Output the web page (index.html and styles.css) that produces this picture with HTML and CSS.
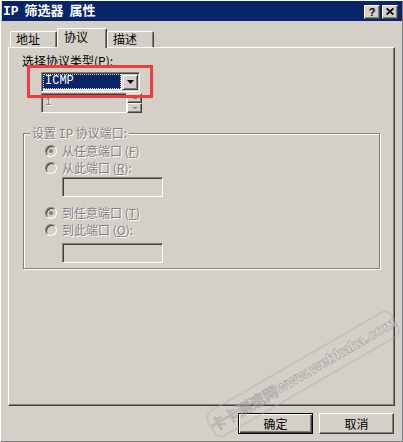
FILE: index.html
```html
<!DOCTYPE html>
<html>
<head>
<meta charset="utf-8">
<title>IP 筛选器 属性</title>
<link rel="stylesheet" href="styles.css">
</head>
<body>
<div class="window">
  <div class="titlebar">
    <span class="title"><span class="lat">IP</span> 筛选器 属性</span>
    <div class="tbtns">
      <span class="tbtn help">?</span>
      <span class="tbtn close"><svg width="8" height="7" viewBox="0 0 8 7"><path d="M0.6 0.4 L7.4 6.6 M7.4 0.4 L0.6 6.6" stroke="#000" stroke-width="1.7"/></svg></span>
    </div>
  </div>

  <div class="tabs">
    <div class="tab t1">地址</div>
    <div class="tab t2 active">协议</div>
    <div class="tab t3">描述</div>
  </div>

  <div class="panel">
    <div class="label">选择协议类型(<u>P</u>):</div>
    <div class="combo">
      <div class="combo-val">ICMP</div>
      <div class="combo-btn"><svg width="7" height="4" viewBox="0 0 7 4"><polygon points="0,0 7,0 3.5,4" fill="#000"/></svg></div>
    </div>
    <div class="spin">
      <div class="spin-edit dis">1</div>
      <div class="spin-btns">
        <div class="sb"><span class="arr up"></span></div>
        <div class="sb"><span class="arr down"></span></div>
      </div>
    </div>

    <div class="group">
      <div class="group-title dis">设置 <span class="lat">IP</span> 协议端口:</div>
      <div class="radio-row first"><span class="radio checked"></span><span class="dis">从任意端口 (<u>F</u>)</span></div>
      <div class="radio-row"><span class="radio"></span><span class="dis">从此端口 (<u>R</u>):</span></div>
      <div class="tb"></div>
      <div class="radio-row gap"><span class="radio checked"></span><span class="dis">到任意端口 (<u>T</u>)</span></div>
      <div class="radio-row"><span class="radio"></span><span class="dis">到此端口 (<u>O</u>):</span></div>
      <div class="tb tb2"></div>
    </div>

    <div class="highlight"></div>
  </div>

  <div class="buttons">
    <div class="btn default">确定</div>
    <div class="btn">取消</div>
  </div>

  <div class="watermark"><span class="wm-cn">卡卡测速网</span><span class="wm-en">www.webkaka.com</span></div>
</div>
</body>
</html>
```

FILE: styles.css
```css
html, body {
  margin: 0;
  padding: 0;
}
body {
  width: 403px;
  height: 442px;
  overflow: hidden;
  background: #d4d0c8;
  font-family: "Noto Sans CJK SC", "Noto Sans", sans-serif;
  font-size: 12px;
  color: #000;
}
.window {
  position: relative;
  width: 403px;
  height: 442px;
  box-sizing: border-box;
  padding: 1px 1px 1px 2px;
  background: #d4d0c8;
  box-shadow: inset 1px 1px 0 #fff, inset -1px -1px 0 #808080;
  overflow: hidden;
  display: flex;
  flex-direction: column;
}
.lat {
  font-family: "Liberation Mono", monospace;
}

/* title bar */
.titlebar {
  height: 20px;
  flex: none;
  background: #0a246a;
  color: #fff;
  display: flex;
  align-items: center;
  justify-content: space-between;
  padding: 0 4px 0 1px;
}
.title {
  font-weight: bold;
  font-size: 13px;
  line-height: 20px;
  white-space: pre;
  word-spacing: 3px;
}
.tbtns {
  display: flex;
  gap: 2px;
  margin-top: 1px;
}
.tbtn {
  width: 16px;
  height: 14px;
  box-sizing: border-box;
  background: #d4d0c8;
  border: 1px solid;
  border-color: #fff #404040 #404040 #fff;
  box-shadow: inset -1px -1px 0 #808080;
  display: flex;
  align-items: center;
  justify-content: center;
  color: #000;
}
.help {
  font-family: "Liberation Sans", sans-serif;
  font-weight: bold;
  font-size: 11px;
  line-height: 12px;
}

/* tabs */
.tabs {
  display: flex;
  align-items: flex-end;
  height: 19px;
  flex: none;
  margin: 7px 0 0 8px;
  position: relative;
  z-index: 2;
}
.tab {
  box-sizing: border-box;
  height: 16px;
  border-top: 1px solid #fff;
  border-left: 1px solid #fff;
  border-right: 1px solid #404040;
  box-shadow: inset -1px 0 0 #808080;
  border-radius: 2px 2px 0 0;
  padding-left: 5px;
  line-height: 14px;
  background: #d4d0c8;
}
.t1 { width: 47px; }
.t2 { width: 50px; }
.t3 { width: 47px; }
.tab.active {
  height: 20px;
  margin-bottom: -1px;
  padding-top: 1px;
  padding-left: 6px;
}

/* panel */
.panel {
  position: relative;
  flex: none;
  margin-left: 6px;
  width: 387px;
  height: 359px;
  box-sizing: border-box;
  border: 1px solid;
  border-color: #fff #404040 #404040 #fff;
  box-shadow: inset -1px -1px 0 #808080;
}
.label {
  margin: 6px 0 0 13px;
  line-height: 14px;
}
.combo {
  margin: 4px 0 0 32px;
  width: 99px;
  height: 20px;
  box-sizing: border-box;
  border: 1px solid;
  border-color: #808080 #fff #fff #808080;
  box-shadow: inset 1px 1px 0 #404040, inset -1px -1px 0 #d4d0c8;
  background: #fff;
  padding: 1px;
  display: flex;
}
.combo-val {
  flex: 1;
  height: 15px;
  box-sizing: border-box;
  margin: 0 1px 0 0;
  background: #0a246a;
  border: 1px dotted #e8dc8a;
  color: #fff;
  font-family: "Liberation Mono", monospace;
  font-size: 12px;
  line-height: 12px;
  padding-left: 1px;
}
.combo-btn {
  width: 16px;
  flex: none;
  box-sizing: border-box;
  background: #d4d0c8;
  border: 1px solid;
  border-color: #d4d0c8 #404040 #404040 #d4d0c8;
  box-shadow: inset 1px 1px 0 #fff, inset -1px -1px 0 #808080;
  display: flex;
  align-items: center;
  justify-content: center;
}

.spin {
  margin: 1px 0 0 32px;
  width: 101px;
  height: 20px;
  display: flex;
}
.spin-edit {
  width: 86px;
  box-sizing: border-box;
  border: 1px solid;
  border-color: #808080 #fff #fff #808080;
  box-shadow: inset 1px 1px 0 #404040, inset -1px -1px 0 #d4d0c8;
  background: #d4d0c8;
  padding-left: 3px;
  font-family: "Liberation Mono", monospace;
  font-size: 11px;
  line-height: 17px;
}
.spin-btns {
  width: 15px;
  display: flex;
  flex-direction: column;
}
.sb {
  flex: 1;
  box-sizing: border-box;
  background: #d4d0c8;
  border: 1px solid;
  border-color: #fff #404040 #404040 #fff;
  box-shadow: inset -1px -1px 0 #808080;
  display: flex;
  align-items: center;
  justify-content: center;
}
.arr {
  width: 0;
  height: 0;
  border-left: 3px solid transparent;
  border-right: 3px solid transparent;
}
.arr.up {
  border-bottom: 2px solid #808080;
}
.arr.down {
  border-top: 2px solid #808080;
}

/* group box */
.dis {
  color: #808080;
  text-shadow: 1px 1px 0 #fff;
}
.group {
  margin: 20px 0 0 14px;
  width: 357px;
  height: 136px;
  box-sizing: border-box;
  border: 1px solid #808080;
  box-shadow: inset 1px 1px 0 #fff, 1px 1px 0 #fff;
}
.group-title {
  display: block;
  width: max-content;
  margin: -8px 0 0 6px;
  padding: 0 2px;
  background: #d4d0c8;
  line-height: 14px;
  height: 14px;
}
.radio-row {
  display: flex;
  align-items: center;
  gap: 5px;
  height: 17px;
  margin-left: 21px;
  line-height: 14px;
  white-space: pre;
}
.radio-row.first {
  margin-top: 2px;
}
.radio-row.gap {
  margin-top: 7px;
}
.radio {
  width: 12px;
  height: 12px;
  box-sizing: border-box;
  border-radius: 50%;
  border: 1px solid;
  border-color: #808080 #fff #fff #808080;
  box-shadow: inset 1px 1px 0 #404040;
  background: #d4d0c8;
  display: flex;
  align-items: center;
  justify-content: center;
  flex: none;
}
.radio.checked::after {
  content: "";
  width: 4px;
  height: 4px;
  border-radius: 50%;
  background: #808080;
}
.tb {
  margin: 1px 0 0 38px;
  width: 101px;
  height: 20px;
  box-sizing: border-box;
  border: 1px solid;
  border-color: #808080 #fff #fff #808080;
  box-shadow: inset 1px 1px 0 #404040, inset -1px -1px 0 #d4d0c8;
  background: #d4d0c8;
}
.tb.tb2 {
  margin-top: 5px;
}

/* red annotation */
.highlight {
  position: absolute;
  left: 18px;
  top: 17px;
  width: 126px;
  height: 33px;
  box-sizing: border-box;
  border: 3px solid #f03c3c;
}

/* buttons */
.buttons {
  display: flex;
  justify-content: flex-end;
  gap: 6px;
  margin-top: 7px;
  padding-right: 8px;
}
.btn {
  width: 75px;
  height: 21px;
  box-sizing: border-box;
  border: 1px solid;
  border-color: #fff #404040 #404040 #fff;
  box-shadow: inset -1px -1px 0 #808080;
  display: flex;
  align-items: center;
  justify-content: center;
  line-height: 14px;
}
.btn.default {
  border-color: #000;
  box-shadow: inset 1px 1px 0 #fff, inset -1px -1px 0 #404040, inset -2px -2px 0 #808080;
}

/* watermark */
.watermark {
  position: absolute;
  left: 196px;
  top: 359px;
  width: 214px;
  height: 30px;
  box-sizing: border-box;
  transform: rotate(-30deg);
  border: 2px solid rgba(170, 170, 170, 0.35);
  border-radius: 9px;
  display: flex;
  align-items: center;
  justify-content: center;
  z-index: 5;
  color: rgba(255, 255, 255, 0.55);
  -webkit-text-stroke: 1px rgba(120, 120, 120, 0.45);
  white-space: nowrap;
}
.wm-cn {
  font-family: "Noto Sans CJK SC", sans-serif;
  font-size: 15px;
  line-height: 20px;
}
.wm-en {
  font-family: "Liberation Sans", sans-serif;
  font-size: 15px;
  font-weight: bold;
  line-height: 20px;
}
```
